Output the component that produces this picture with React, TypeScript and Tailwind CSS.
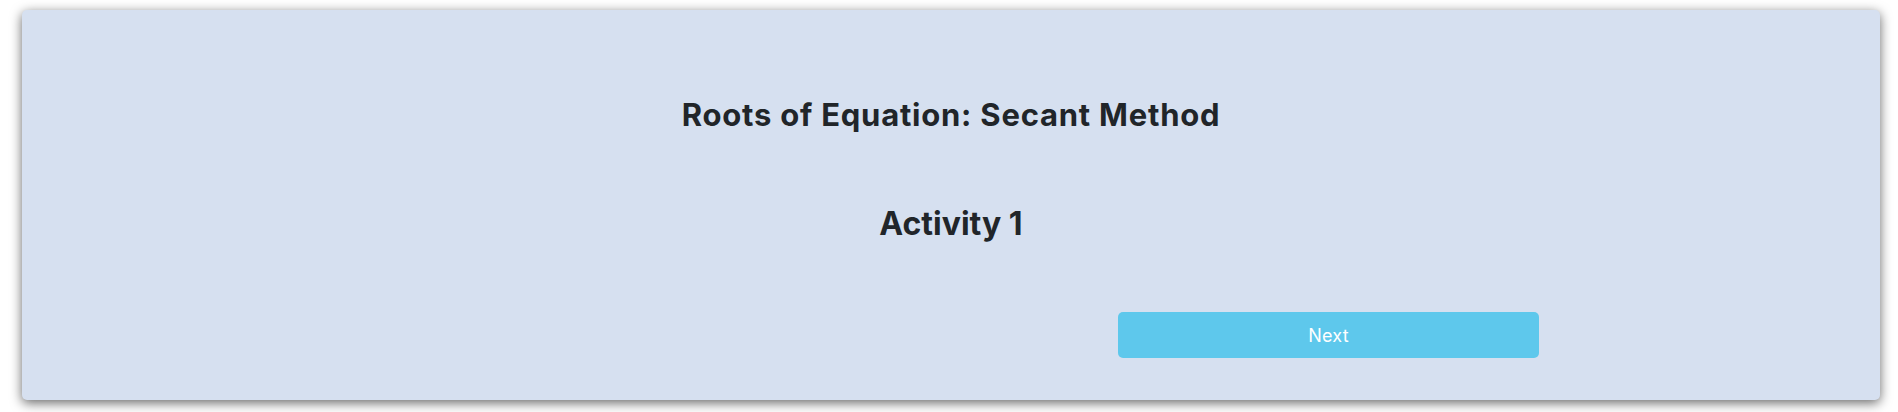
export default function App() {
  return (
    <div className="w-[1898px] h-[412px] bg-white pt-[10px] pl-[22px] pr-[18px] font-['Inter','Liberation_Sans',sans-serif]">
      <div className="h-[390px] rounded-[5px] bg-[#d6e0f0] shadow-[0_3px_12px_rgba(0,0,0,0.6)] text-[#212529]">
        {/* heading block */}
        <div className="pt-[87px] flex flex-col items-center">
          <h1 className="text-[31px] leading-[36px] font-bold tracking-[0.025em]">
            Roots of Equation: Secant Method
          </h1>
          <h2 className="mt-[71px] text-[32px] leading-[40px] font-bold">
            Activity 1
          </h2>
        </div>
        {/* footer row */}
        <div className="grid grid-cols-[1096px_421px_1fr] mt-[68px]">
          <div></div>
          <button className="h-[46px] rounded-[5px] bg-[#5ec8ec] text-white text-[18px] tracking-[0.01em]">
            Next
          </button>
        </div>
      </div>
    </div>
  );
}
